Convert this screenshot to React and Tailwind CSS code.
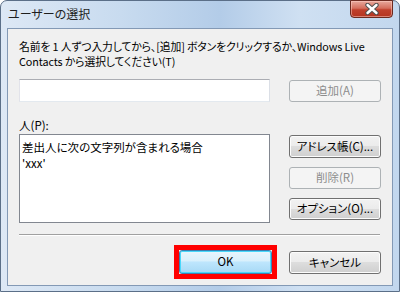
import React from "react";

const jp = "font-['Meiryo_UI','Noto_Sans_CJK_JP',sans-serif] [font-feature-settings:'palt']";

const Btn = ({ children, disabled, className = "" }) => (
    <button
        className={
            "flex items-center justify-center rounded-[3px] border text-[11.5px] leading-none " +
            (disabled
                ? "border-[#adb2b5] bg-[#f4f4f4] text-[#8d8d8d] "
                : "border-[#707070] bg-[linear-gradient(#f2f2f2_0%,#ebebeb_49%,#dddddd_50%,#cfcfcf_100%)] text-black shadow-[inset_0_0_0_1px_#fcfcfc] ") +
            className
        }
    >
        {children}
    </button>
);

const CloseIcon = () => (
    <svg width="16" height="12" viewBox="0 0 16 12">
        <path d="M3.5 2 L12.5 10 M12.5 2 L3.5 10" fill="none" stroke="#505050" strokeWidth="4.4" strokeLinecap="round" />
        <path d="M3.5 2 L12.5 10 M12.5 2 L3.5 10" fill="none" stroke="#ffffff" strokeWidth="2.4" strokeLinecap="round" />
    </svg>
);

export default function App() {
    return (
        <div className={"w-[400px] h-[292px] overflow-hidden bg-white " + jp}>
            <div className="w-[400px] h-[292px] flex flex-col rounded-t-[7px] border border-[#5b6f88] bg-[linear-gradient(90deg,#dde8f5_0%,#c8dbef_30%,#b3cce8_55%,#cfe0f2_75%,#c2d7ee_100%)]">
                <div className="h-[27px] flex items-start justify-between shrink-0">
                    <div className="pl-[7px] pt-[5px] text-[12px] leading-[16px] text-[#1e1e1e]">ユーザーの選択</div>
                    <div className="mr-[6px] w-[43px] h-[18px] -mt-px flex items-center justify-center rounded-b-[4px] border border-[#6b2a20] bg-[linear-gradient(#e8a99d_0%,#d46e5d_45%,#c0402c_55%,#b4341f_100%)] shadow-[inset_0_0_0_1px_rgba(255,210,200,0.5)]">
                        <CloseIcon />
                    </div>
                </div>
                <div className="mx-[6px] h-[258px] border border-[#8399b5] bg-[#f0f0f0] flex flex-col pl-[11px] pr-[11px] text-[11.5px] text-black">
                    <div className="mt-[10px] leading-[15px] whitespace-nowrap text-[10.8px] tracking-[-0.1px]">
                        <div>名前を 1 人ずつ入力してから、[追加] ボタンをクリックするか、Windows Live</div>
                        <div>Contacts から選択してください(T)</div>
                    </div>
                    <div className="mt-[10px] flex justify-between items-start">
                        <div className="w-[251px] h-[23px] bg-white border border-[#abadb3] border-l-[#e2e3ea] border-r-[#dbdfe6] border-b-[#e3e9ef]"></div>
                        <Btn disabled className="w-[92px] h-[22px] mt-px">追加(A)</Btn>
                    </div>
                    <div className="mt-[17px] leading-[13px]">人(P):</div>
                    <div className="mt-[2px] flex justify-between items-start">
                        <div className="w-[251px] h-[89px] bg-white border border-[#828790] px-[2px] pt-[4px] leading-[16px]">
                            <div>差出人に次の文字列が含まれる場合</div>
                            <div>'xxx'</div>
                        </div>
                        <div className="w-[92px] flex flex-col gap-[9px] mt-px">
                            <Btn className="w-[92px] h-[23px]">アドレス帳(C)...</Btn>
                            <Btn disabled className="w-[92px] h-[22px]">削除(R)</Btn>
                            <Btn className="w-[92px] h-[22px]">オプション(O)...</Btn>
                        </div>
                    </div>
                    <div className="mt-[11px] h-[2px] border-t border-[#a0a0a0] border-b border-b-white mr-[1px]"></div>
                    <div className="mt-[9px] flex justify-end items-start gap-[13px]">
                        <div className="border-[5px] border-[#ff0000] -mr-px">
                            <button className="w-[93px] h-[24px] flex items-center justify-center rounded-[3px] border border-[#3c7fb1] bg-[linear-gradient(#eaf6fd_0%,#d9f0fc_45%,#bee6fd_50%,#a7d9f5_100%)] shadow-[inset_0_0_0_1px_#48d8fb] text-[11.5px] leading-none">OK</button>
                        </div>
                        <Btn className="w-[92px] h-[23px] mt-[6px]">キャンセル</Btn>
                    </div>
                </div>
            </div>
        </div>
    );
}
